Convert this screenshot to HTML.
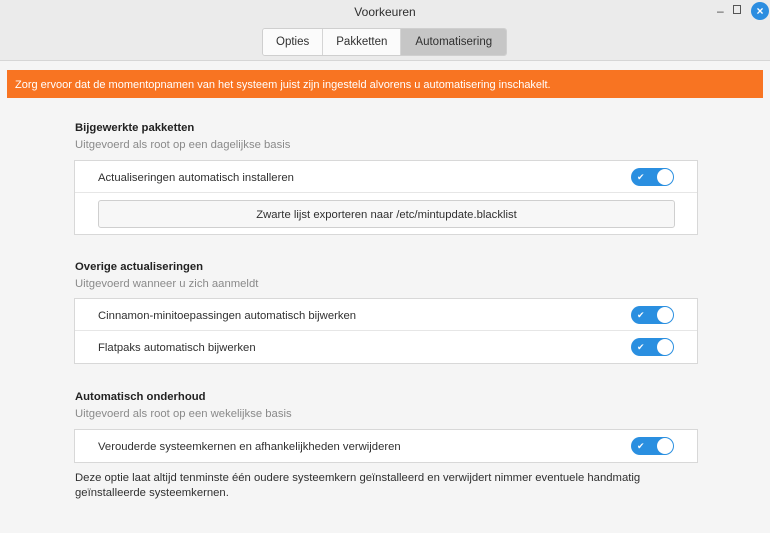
<!DOCTYPE html>
<html><head><style>
*{box-sizing:border-box;margin:0;padding:0}
body{width:770px;height:533px;background:#f5f5f5;font-family:"Liberation Sans",sans-serif;font-size:11.3px;color:#303030;position:relative;overflow:hidden}
.hdr{position:absolute;left:0;top:0;width:770px;height:61px;background:#ebebeb;border-bottom:1px solid #d6d6d6}
.title{position:absolute;top:5px;width:100%;text-align:center;font-size:12px;color:#2e2e2e}
.tabs{position:absolute;left:262px;top:28px;height:28px;display:flex;border:1px solid #cfcfcf;border-radius:3px;overflow:hidden}
.tabs div{padding:0 13px;line-height:26px;background:#fbfbfb;border-right:1px solid #d5d5d5;font-size:11.5px}
.tabs div.on{background:#c6c6c6;border-right:none;padding:0 14px}
.wb{position:absolute;top:4px;font-size:12px;color:#444}
.close{position:absolute;left:751px;top:2px;width:18px;height:18px;border-radius:50%;background:#2b8de0;color:#fff;font-size:12px;font-weight:bold;text-align:center;line-height:18px}
.warn{position:absolute;left:7px;top:70px;width:756px;height:28px;background:#f87422;color:#fff;font-size:11px;line-height:30px;padding-left:8px}
.h{position:absolute;left:75px;font-weight:bold;font-size:11.3px;color:#222}
.s{position:absolute;left:75px;color:#8a8a8a;font-size:11.3px}
.frame{position:absolute;left:74px;width:624px;background:#fff;border:1px solid #d8d8d8}
.row{position:relative;height:32px;line-height:34px;padding-left:23px;border-bottom:1px solid #e6e6e6}
.row:last-child{border-bottom:none}
.tg{position:absolute;left:556px;top:7px;width:43px;height:18px;border-radius:9px;background:#2a8fe0}
.tg:after{content:"";position:absolute;right:1px;top:1px;width:16px;height:16px;border-radius:50%;background:#fff}
.tg span{position:absolute;left:6px;top:0;color:#fff;font-size:9px;line-height:18px}
.btn{position:absolute;left:23px;top:39px;width:577px;height:28px;border:1px solid #cfcfcf;border-radius:3px;background:#f7f7f7;text-align:center;line-height:28px}
.note{position:absolute;left:75px;top:471px;width:600px;line-height:15px;font-size:11.3px}
</style></head><body>
<div class="hdr">
<div class="title">Voorkeuren</div>
<div class="wb" style="left:717px">–</div>
<div class="wb" style="left:733px;top:5px;width:8px;height:9px;border:1.5px solid #555"></div>
<div class="close">×</div>
<div class="tabs"><div>Opties</div><div>Pakketten</div><div class="on">Automatisering</div></div>
</div>
<div class="warn">Zorg ervoor dat de momentopnamen van het systeem juist zijn ingesteld alvorens u automatisering inschakelt.</div>

<div class="h" style="top:122px">Bijgewerkte pakketten</div>
<div class="s" style="top:139px">Uitgevoerd als root op een dagelijkse basis</div>
<div class="frame" style="top:160px;height:75px">
<div class="row">Actualiseringen automatisch installeren<div class="tg"><span>✔</span></div></div>
<div class="btn">Zwarte lijst exporteren naar /etc/mintupdate.blacklist</div>
</div>

<div class="h" style="top:261px">Overige actualiseringen</div>
<div class="s" style="top:278px">Uitgevoerd wanneer u zich aanmeldt</div>
<div class="frame" style="top:298px">
<div class="row">Cinnamon-minitoepassingen automatisch bijwerken<div class="tg"><span>✔</span></div></div>
<div class="row">Flatpaks automatisch bijwerken<div class="tg"><span>✔</span></div></div>
</div>

<div class="h" style="top:391px">Automatisch onderhoud</div>
<div class="s" style="top:408px">Uitgevoerd als root op een wekelijkse basis</div>
<div class="frame" style="top:429px">
<div class="row">Verouderde systeemkernen en afhankelijkheden verwijderen<div class="tg"><span>✔</span></div></div>
</div>
<div class="note">Deze optie laat altijd tenminste één oudere systeemkern geïnstalleerd en verwijdert nimmer eventuele handmatig geïnstalleerde systeemkernen.</div>
</body></html>
